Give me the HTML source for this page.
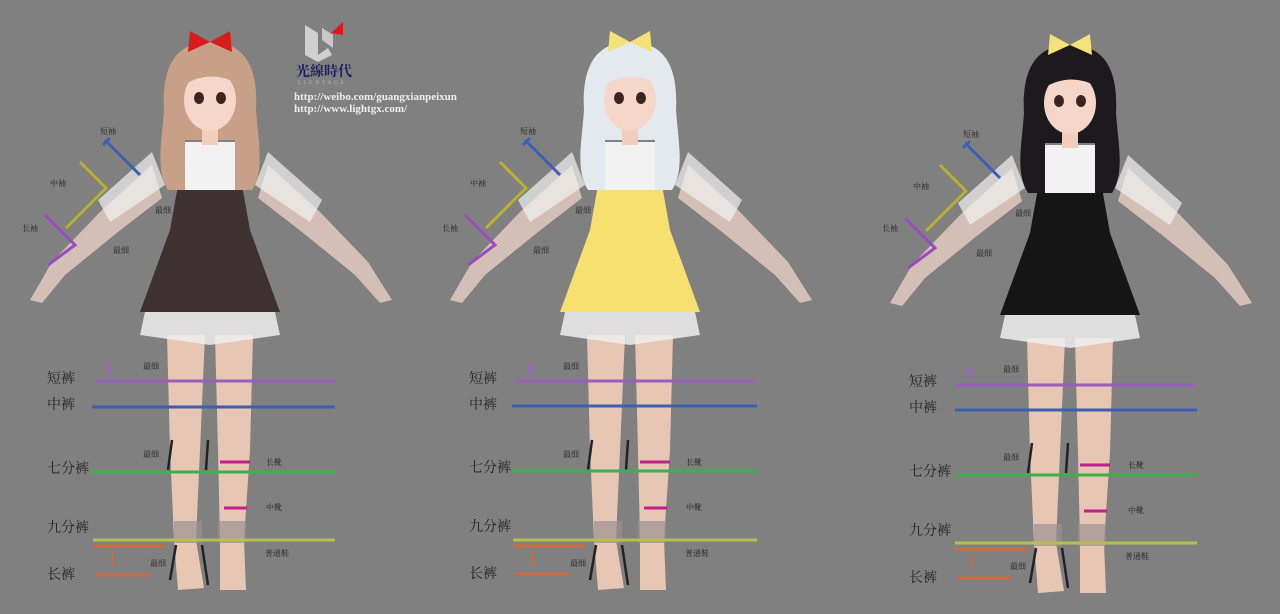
<!DOCTYPE html>
<html><head><meta charset="utf-8"><style>
html,body{margin:0;padding:0;background:#808080;width:1280px;height:614px;overflow:hidden}
svg{display:block}
text{font-family:"Liberation Serif","Noto Serif CJK SC",serif}
.lb{font-size:14px;fill:#222}
.sm{font-size:8px;fill:#222}
</style></head><body>
<svg width="1280" height="614" viewBox="0 0 1280 614" xmlns="http://www.w3.org/2000/svg">
<rect width="1280" height="614" fill="#808080"/>
<defs>
<g id="fig">
  <!-- arms -->
  <path d="M152 165 L100 212 L52 262 L30 300 L42 303 L65 275 L118 232 L162 198Z" fill="#f0d4c8" opacity=".75"/>
  <path d="M268 165 L320 212 L368 262 L392 300 L380 303 L355 275 L302 232 L258 198Z" fill="#f0d4c8" opacity=".75"/>
  <path d="M152 152 L98 200 L110 222 L165 185Z" fill="#f2f2f2" opacity=".7"/>
  <path d="M268 152 L322 200 L310 222 L255 185Z" fill="#f2f2f2" opacity=".7"/>
  <!-- legs -->
  <path d="M167 335 L205 335 L200 450 L196 540 L204 588 L178 590 L174 540 L170 450Z" fill="#f3cdb9" opacity=".9"/>
  <path d="M215 335 L253 335 L250 450 L244 540 L246 590 L220 590 L220 540 L218 450Z" fill="#f3cdb9" opacity=".9"/>
  <rect x="174" y="521" width="28" height="22" fill="#9a9090" opacity=".7"/>
  <rect x="218" y="521" width="28" height="22" fill="#9a9090" opacity=".7"/>
  <!-- dress -->
  <path d="M178 185 L242 185 L250 230 L280 312 L140 312 L170 230Z" style="fill:var(--dr)"/>
  <path d="M145 312 L275 312 L280 335 L210 345 L140 335Z" fill="#eeeeee" opacity=".85"/>
  <!-- top / collar -->
  <path d="M172 142 L248 142 L258 162 L240 190 L180 190 L162 162Z" fill="#f2f2f2"/>
  <!-- hair back -->
  <path d="M210 42 C172 42 162 72 164 110 C162 140 155 170 168 190 L185 190 L185 140 L235 140 L235 190 L252 190 C265 170 258 140 256 110 C258 72 248 42 210 42Z" style="fill:var(--hr)"/>
  <rect x="202" y="125" width="16" height="20" fill="#f2cdbb"/>
  <ellipse cx="210" cy="100" rx="26" ry="31" fill="#f5d6c8"/>
  <ellipse cx="199" cy="98" rx="5" ry="6" fill="#3a2420"/>
  <ellipse cx="221" cy="98" rx="5" ry="6" fill="#3a2420"/>
  <path d="M182 72 Q210 55 238 72 L238 84 Q210 68 182 86Z" style="fill:var(--hr)"/>
  <path d="M210 42 L190 31 L188 52Z M210 42 L230 31 L232 52Z" style="fill:var(--bw)"/>
  <!-- arm markers -->
  <path d="M105 140 L140 175" stroke="#3f5fb0" stroke-width="3" fill="none"/>
  <path d="M103 145 L110 138" stroke="#3f5fb0" stroke-width="3"/>
  <path d="M80 162 L106 188 L66 228" stroke="#b8b030" stroke-width="3" fill="none"/>
  <path d="M45 215 L75 245 L48 265" stroke="#9a4bc0" stroke-width="3" fill="none"/>
  <!-- shoe markers -->
  <path d="M220 462 H250 M224 508 H247" stroke="#c0208a" stroke-width="3"/>
  <path d="M172 440 L168 470 M208 440 L206 470 M176 545 L170 580 M202 545 L208 585" stroke="#222" stroke-width="2.5"/>
  <path d="M110 363 V375" stroke="#a060c0" stroke-width="3"/>
  <path d="M113 552 V566" stroke="#cc6a40" stroke-width="2"/>
</g>
</defs>
<g style="--dr:#3d3131;--hr:#c8a088;--bw:#d81c1c"><use href="#fig"/></g>
<g style="--dr:#f5e070;--hr:#e4e8ef;--bw:#f3e278" transform="translate(420,0)"><use href="#fig"/></g>
<g style="--dr:#151515;--hr:#1c1a1c;--bw:#f3e278" transform="translate(860,3)"><use href="#fig"/></g>

<g stroke-width="3">
<path d="M95 381H335M515 381H755M955 385H1195" stroke="#9860b8"/>
<path d="M92 407H335M512 406H757M955 410H1197" stroke="#3d5fb0"/>
<path d="M92 472H335M512 471H757M955 475H1197" stroke="#3cb04a"/>
<path d="M93 540H335M513 540H757M955 543H1197" stroke="#b6c050"/>
<path d="M95 575H150M515 574H570M958 578H1012M93 546H165M513 546H585M955 549H1028" stroke="#cc6a40"/>
</g>

<g class="lb">
<text x="47" y="383">短裤</text><text x="47" y="409">中裤</text><text x="47" y="473">七分裤</text><text x="47" y="532">九分裤</text><text x="47" y="579">长裤</text>
<text x="469" y="383">短裤</text><text x="469" y="409">中裤</text><text x="469" y="472">七分裤</text><text x="469" y="531">九分裤</text><text x="469" y="578">长裤</text>
<text x="909" y="386">短裤</text><text x="909" y="412">中裤</text><text x="909" y="476">七分裤</text><text x="909" y="535">九分裤</text><text x="909" y="582">长裤</text>
</g>
<g class="sm">
<text x="100" y="134">短袖</text><text x="50" y="186">中袖</text><text x="22" y="231">长袖</text><text x="155" y="213">最细</text><text x="113" y="253">最细</text><text x="143" y="369">最细</text><text x="143" y="457">最细</text><text x="150" y="566">最细</text><text x="266" y="465">长靴</text><text x="266" y="510">中靴</text><text x="265" y="556">普通鞋</text>
<text x="520" y="134">短袖</text><text x="470" y="186">中袖</text><text x="442" y="231">长袖</text><text x="575" y="213">最细</text><text x="533" y="253">最细</text><text x="563" y="369">最细</text><text x="563" y="457">最细</text><text x="570" y="566">最细</text><text x="686" y="465">长靴</text><text x="686" y="510">中靴</text><text x="685" y="556">普通鞋</text>
<text x="963" y="137">短袖</text><text x="913" y="189">中袖</text><text x="882" y="231">长袖</text><text x="1015" y="216">最细</text><text x="976" y="256">最细</text><text x="1003" y="372">最细</text><text x="1003" y="460">最细</text><text x="1010" y="569">最细</text><text x="1128" y="468">长靴</text><text x="1128" y="513">中靴</text><text x="1125" y="559">普通鞋</text>
</g>

<path d="M305 25 L318 33 L318 55 L328 48 L332 55 L318 62 L305 55Z" fill="#d0d0d0"/>
<path d="M322 28 L333 35 L333 48 L322 40Z" fill="#c8c8c8"/>
<path d="M343 22 L343 35 L331 33Z" fill="#e01818"/>
<text x="296" y="76" style="font-size:14px;font-weight:bold;fill:#1c2060">光線時代</text>
<text x="298" y="84" style="font-size:5px;letter-spacing:3px;fill:#bbb">LIGHTAGE</text>
<text x="294" y="100" style="font-size:11px;font-weight:bold;fill:#eee">http://weibo.com/guangxianpeixun</text>
<text x="294" y="112" style="font-size:11px;font-weight:bold;fill:#eee">http://www.lightgx.com/</text>
</svg>
</body></html>
